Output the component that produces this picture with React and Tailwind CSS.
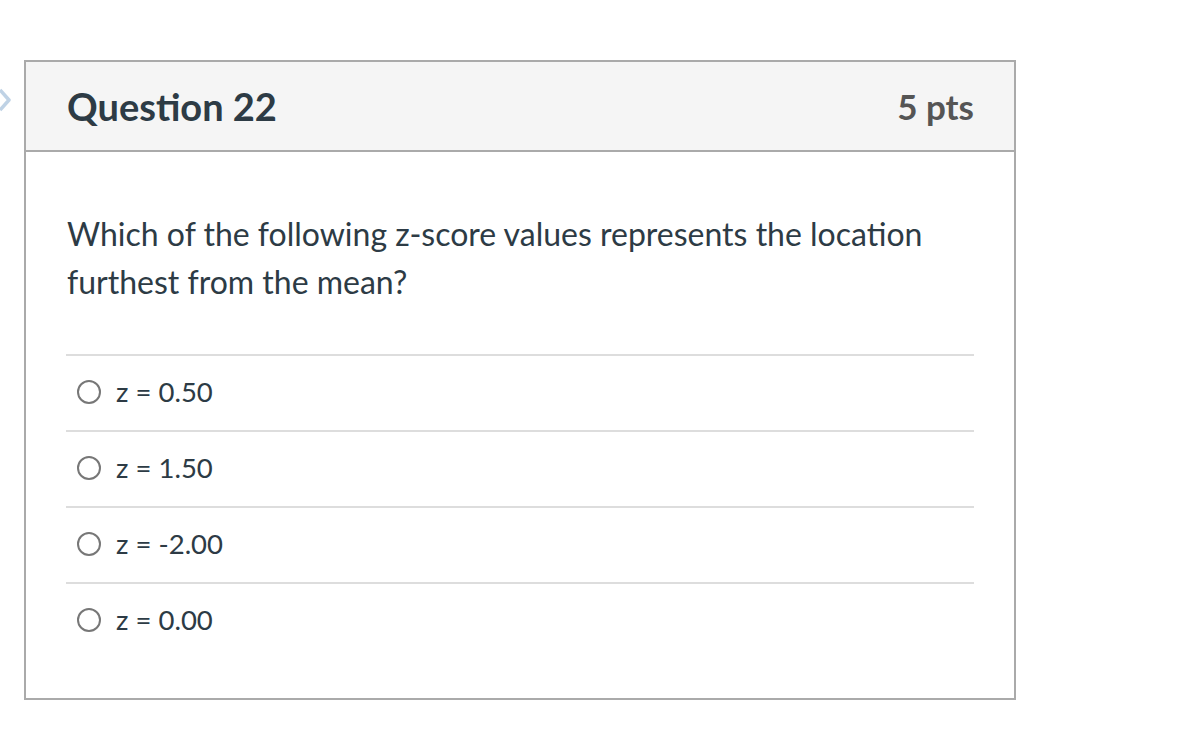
import React from "react";

const answers = ["z = 0.50", "z = 1.50", "z = -2.00", "z = 0.00"];

export default function App() {
  return (
    <div
      className="relative w-[1204px] h-[752px] bg-white pt-[60px] pl-[24px]"
      style={{ fontFamily: "Lato, 'Open Sans', sans-serif" }}
    >
      <svg
        className="absolute left-0 top-[86px]"
        width="12"
        height="28"
        viewBox="0 0 12 28"
      >
        <polyline
          points="0,4 9,14 0,24"
          fill="none"
          stroke="#a9c3dc"
          strokeWidth="3.5"
          strokeLinejoin="round"
          opacity="0.75"
        />
      </svg>
      <div className="w-[992px] h-[640px] border-2 border-[#aaaaaa] flex flex-col">
        <div className="h-[90px] bg-[#f5f5f5] border-b-2 border-[#aaaaaa] flex items-center justify-between pl-[41px] pr-[40px]">
          <span className="text-[38px] font-bold text-[#2d3b45] leading-none">Question 22</span>
          <span className="text-[35px] font-bold text-[#555555] leading-none">5 pts</span>
        </div>
        <div className="px-[40px] pt-[58px]">
          <p className="text-[32px] leading-[48px] text-[#2d3b45] pl-[1px]">
            Which of the following z-score values represents the location furthest from the mean?
          </p>
          <div className="mt-[48px] w-[908px]">
            {answers.map((a) => (
              <div
                key={a}
                className="h-[76px] border-t-2 border-[#dddddd] flex items-center pl-[11px] pb-[3px]"
              >
                <span className="w-[24px] h-[24px] rounded-full border-2 border-[#777777] bg-white" />
                <span className="ml-[15px] text-[27.5px] text-[#2d3b45]">{a}</span>
              </div>
            ))}
          </div>
        </div>
      </div>
    </div>
  );
}
